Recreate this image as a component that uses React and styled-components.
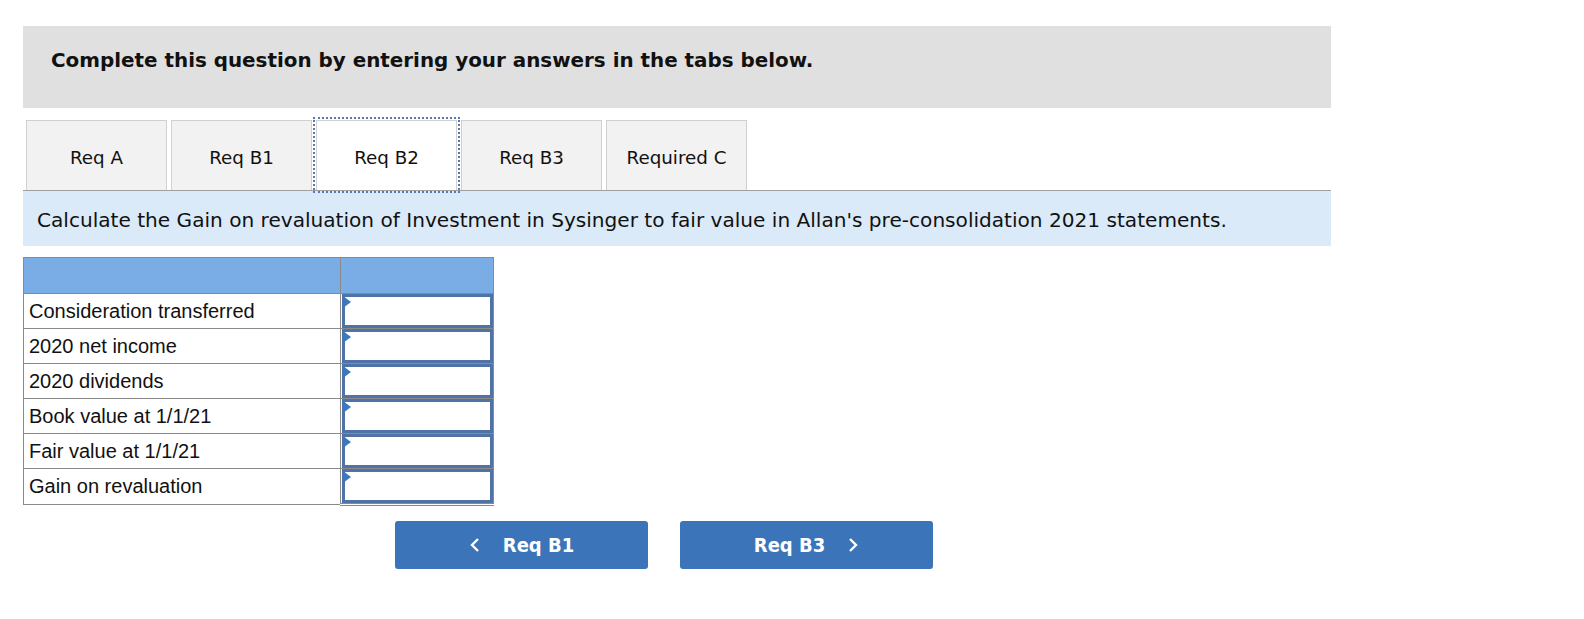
import React from "react";
import styled, { createGlobalStyle } from "styled-components";

const GlobalStyle = createGlobalStyle`
  body {
    margin: 0;
    background: #fff;
    font-family: "DejaVu Sans", Verdana, sans-serif;
  }
`;

const Page = styled.div`
  width: 1308px;
  padding: 26px 0 0 23px;
`;

const Banner = styled.div`
  height: 82px;
  box-sizing: border-box;
  padding: 23px 28px 0;
  background: #e0e0e0;
  font-weight: bold;
  font-size: 19.9px;
  color: #111;
`;

const TabBar = styled.div`
  display: flex;
  gap: 4px;
  margin-top: 12px;
  padding-left: 3px;
  border-bottom: 1px solid #a0a0a0;
`;

const Tab = styled.div`
  width: 141px;
  height: 70px;
  box-sizing: border-box;
  display: flex;
  align-items: center;
  justify-content: center;
  padding-top: ${(p) => (p.$active ? 3 : 4)}px;
  font-size: 18.3px;
  color: #111;
  background: ${(p) => (p.$active ? "#fff" : "#f2f2f2")};
  border: 1px solid #d0d0d0;
  border-bottom: none;
  ${(p) =>
    p.$active &&
    `
    outline: 2px dotted #5a78b0;
    outline-offset: 1px;
  `}
`;

const Instruction = styled.div`
  height: 55px;
  box-sizing: border-box;
  display: flex;
  align-items: center;
  padding: 2px 0 0 14px;
  background: #dbeaf8;
  font-size: 20.1px;
  color: #111;
  white-space: nowrap;
`;

const Table = styled.table`
  margin-top: 11px;
  border-collapse: collapse;
  font-family: "Liberation Sans", Arial, sans-serif;
  font-size: 20px;
  color: #111;
`;

const HeadCell = styled.th`
  height: 35px;
  padding: 0;
  width: ${(p) => p.$w}px;
  background: #7aade5;
  border: 1px solid #8a8a8a;
`;

const LabelCell = styled.td`
  height: 34px;
  padding: 0 5px;
  border: 1px solid #8a8a8a;
  white-space: nowrap;
`;

const InputCell = styled.td`
  padding: 0;
  border: 1px solid #8a8a8a;
  ${(p) => p.$last && `border-bottom: 3px double #8a8a8a;`}
`;

const InputBox = styled.div`
  position: relative;
  height: 34px;
  box-sizing: border-box;
  border: 3px solid #4f73a6;
  margin-left: 1px;
  background: #fff;
  &::before {
    content: "";
    position: absolute;
    left: -2px;
    top: -1px;
    border-top: 6px solid transparent;
    border-bottom: 6px solid transparent;
    border-left: 8px solid #3b78c2;
  }
`;

const NavRow = styled.div`
  display: flex;
  gap: 32px;
  margin-top: 15px;
  padding-left: 372px;
`;

const NavButton = styled.button`
  width: 253px;
  height: 48px;
  border: none;
  border-radius: 3px;
  background: #3b74b9;
  color: #fff;
  font-family: "DejaVu Sans Condensed", "DejaVu Sans", sans-serif;
  font-weight: bold;
  font-size: 20px;
  display: flex;
  align-items: center;
  justify-content: center;
  gap: 22px;
  cursor: pointer;
`;

const Chevron = styled.svg`
  width: 12px;
  height: 16px;
`;

const rows = [
  "Consideration transferred",
  "2020 net income",
  "2020 dividends",
  "Book value at 1/1/21",
  "Fair value at 1/1/21",
  "Gain on revaluation",
];

const tabs = ["Req A", "Req B1", "Req B2", "Req B3", "Required C"];

export default function App() {
  return (
    <>
      <GlobalStyle />
      <Page>
        <Banner>Complete this question by entering your answers in the tabs below.</Banner>
        <TabBar>
          {tabs.map((t) => (
            <Tab key={t} $active={t === "Req B2"}>
              {t}
            </Tab>
          ))}
        </TabBar>
        <Instruction>
          Calculate the Gain on revaluation of Investment in Sysinger to fair value in Allan's
          pre-consolidation 2021 statements.
        </Instruction>
        <Table>
          <thead>
            <tr>
              <HeadCell $w={316} />
              <HeadCell $w={152} />
            </tr>
          </thead>
          <tbody>
            {rows.map((r, i) => (
              <tr key={r}>
                <LabelCell>{r}</LabelCell>
                <InputCell $last={i === rows.length - 1}>
                  <InputBox />
                </InputCell>
              </tr>
            ))}
          </tbody>
        </Table>
        <NavRow>
          <NavButton>
            <Chevron viewBox="0 0 12 16">
              <path d="M9 2 L3 8 L9 14" fill="none" stroke="#fff" strokeWidth="2.4" />
            </Chevron>
            Req B1
          </NavButton>
          <NavButton>
            Req B3
            <Chevron viewBox="0 0 12 16">
              <path d="M3 2 L9 8 L3 14" fill="none" stroke="#fff" strokeWidth="2.4" />
            </Chevron>
          </NavButton>
        </NavRow>
      </Page>
    </>
  );
}
